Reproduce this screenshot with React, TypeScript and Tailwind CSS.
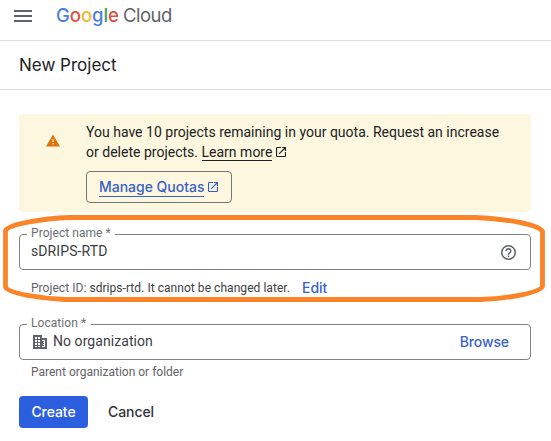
import React from 'react';

const google: [string, string][] = [
  ['G', 'text-[#4a80e4]'],
  ['o', 'text-[#dd4f40]'],
  ['o', 'text-[#f2b928]'],
  ['g', 'text-[#4a80e4]'],
  ['l', 'text-[#3d9f58]'],
  ['e', 'text-[#dd4f40]'],
];

function OpenInNew({ className }: { className: string }) {
  return (
    <svg viewBox="3 3 18 18" className={className} fill="currentColor">
      <path d="M19 19H5V5h7V3H5a2 2 0 0 0-2 2v14a2 2 0 0 0 2 2h14c1.1 0 2-.9 2-2v-7h-2v7zM14 3v2h3.59l-9.83 9.83 1.41 1.41L19 6.41V10h2V3h-7z" />
    </svg>
  );
}

function Field({ label, labelWidth, children }: { label: string; labelWidth: string; children: React.ReactNode }) {
  return (
    <div className="relative flex h-9 items-center rounded-[4px] border border-[#808286] pl-[11px]">
      <span className={`absolute -top-[10px] left-[7px] h-4 whitespace-nowrap bg-white pl-1 text-[12px] leading-4 tracking-[0.06px] text-[#6b6e72] ${labelWidth}`}>
        {label}
      </span>
      {children}
    </div>
  );
}

export default function App() {
  return (
    <div className="relative h-[441px] w-[551px] overflow-hidden bg-white font-['Roboto',sans-serif] text-[#202124]">
      <header className="flex h-[41px] items-start border-b border-[#dadce0] pl-[14px]">
        <button aria-label="Menu" className="mt-[10px] flex w-[18px] flex-col gap-[3px]">
          <i className="h-[2px] w-full bg-[#5f6368]" />
          <i className="h-[2px] w-full bg-[#5f6368]" />
          <i className="h-[2px] w-full bg-[#5f6368]" />
        </button>
        <div className="ml-[23px] mt-[3px] flex whitespace-nowrap pl-px font-['Inter',sans-serif] text-[18.5px] leading-6">
          <span className="font-medium tracking-[-0.05px]">
            {google.map(([c, color], i) => (
              <span key={i} className={color}>{c}</span>
            ))}
          </span>
          <span className="ml-[4px] tracking-[-0.5px] text-[#5f6368]">Cloud</span>
        </div>
      </header>
      <div className="flex h-[49px] items-center border-b border-[#dadce0] pl-[19px]">
        <h1 className="whitespace-nowrap font-['Inter',sans-serif] text-[17px] leading-6">New Project</h1>
      </div>

      <main className="px-[19px] pr-5 pt-6">
        <section className="flex h-[98px] rounded-[4px] bg-[#fcf7de]">
          <svg viewBox="1 2 22 19" className="ml-[27px] mt-[20px] h-[13px] w-[14px]" fill="#dd7509">
            <path d="M1 21h22L12 2 1 21z" />
            <path fill="#fcf7de" d="M11.1 9h1.8v5h-1.8zM11.1 15.5h1.8v2h-1.8z" />
          </svg>
          <div className="ml-[26px] pt-2">
            <p className="whitespace-nowrap text-[14px] leading-5 tracking-[0.008px]">
              You have 10 projects remaining in your quota. Request an increase
              <br />
              or delete projects. <a className="inline-block h-[19px] border-b border-[#202124] leading-5">Learn more</a>
              <OpenInNew className="ml-1 inline-block h-[10px] w-[10px] align-[0px]" />
            </p>
            <button className="mt-[9px] flex h-8 w-[146px] items-center rounded-[4px] border border-[#747775] pl-3 font-['Inter',sans-serif] text-[14px] font-medium text-[#3862c8]">
              <span className="h-[19px] whitespace-nowrap border-b border-[#3862c8] leading-[18px] tracking-[-0.02px]">Manage Quotas</span>
              <OpenInNew className="ml-1 h-[10px] w-[10px]" />
            </button>
          </div>
        </section>

        <div className="mt-[22px]">
          <Field label="Project name *" labelWidth="w-[88px]">
            <span className="-mt-[3px] text-[14px] leading-5 tracking-[0.1px] text-[#3c4043]">sDRIPS-RTD</span>
            <svg viewBox="2 2 20 20" className="ml-auto mr-[14px] h-[15px] w-[15px]" fill="#5f6368">
              <path d="M11 18h2v-2h-2v2zm1-16a10 10 0 1 0 0 20 10 10 0 0 0 0-20zm0 18a8 8 0 1 1 0-16 8 8 0 0 1 0 16zm0-14a4 4 0 0 0-4 4h2a2 2 0 1 1 4 0c0 2-3 1.75-3 5h2c0-2.25 3-2.5 3-5a4 4 0 0 0-4-4z" />
            </svg>
          </Field>
          <div className="flex h-[35px] items-center whitespace-nowrap pl-3 text-[12px] text-[#5f6368]">
            <span className="tracking-[0.05px]">Project ID: <span className="text-[#3c4043]">sdrips-rtd. It cannot be changed later.</span></span>
            <button className="ml-3 font-['Inter',sans-serif] text-[14px] font-medium text-[#3862c8]">Edit</button>
          </div>
        </div>

        <div className="mt-[19px]">
          <Field label="Location *" labelWidth="w-[64px]">
            <svg viewBox="0 0 14 14" className="ml-[2px] h-[14px] w-[14px]" fill="#5f6368">
              <path d="M0 0h9v3h5v11H0z" />
              <path fill="#fff" d="M2 2h2v2H2zM5 2h2v2H5zM2 5h2v2H2zM5 5h2v2H5zM2 8h2v2H2zM5 8h2v2H5zM2 11h2v1H2zM5 11h2v1H5zM9 5h3v7H9v-1h2v-1h-1V9h1V8h-1V7h1V6H9z" />
            </svg>
            <span className="-mt-[3px] ml-[6px] text-[14px] leading-5 tracking-[0.06px] text-[#3c4043]">No organization</span>
            <button className="-mt-px ml-auto mr-[21px] font-['Inter',sans-serif] text-[14px] font-medium tracking-[-0.1px] text-[#3862c8]">Browse</button>
          </Field>
          <p className="mt-1 pl-3 text-[12px] leading-4 text-[#5f6368]">Parent organization or folder</p>
        </div>

        <div className="mt-4 flex h-8 items-center font-['Inter',sans-serif] text-[14px] font-medium tracking-[-0.07px]">
          <button className="h-8 w-[69px] rounded-[4px] bg-[#2c5fe0] pb-px text-white">Create</button>
          <button className="ml-5 pb-px text-[#303236]">Cancel</button>
        </div>
      </main>

      <svg viewBox="0 0 551 441" className="pointer-events-none absolute inset-0 h-full w-full" fill="none" stroke="#fb8429" strokeWidth="4.8">
        <path d="M70 217.5H475C505 219 538 223.5 542.5 231.5V286C541 292 512 298.5 480 299.5H65C42 298.5 8 293.5 5.5 287V231C7 224.5 42 218.5 70 217.5Z" />
      </svg>
    </div>
  );
}
